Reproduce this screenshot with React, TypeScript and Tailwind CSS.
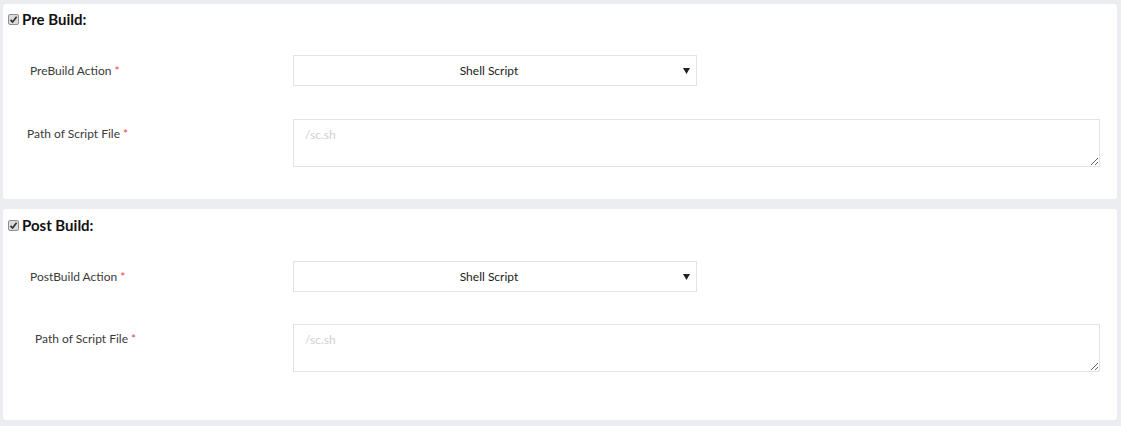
import React from "react";

function Check() {
  return (
    <span className="inline-flex h-[11px] w-[11px] items-center justify-center rounded-[2px] border border-[#8f8f8f] bg-[#dcdcdc]">
      <svg width="9" height="9" viewBox="0 0 9 9">
        <path d="M1.5 4.8 L3.6 7 L7.6 1.8" fill="none" stroke="#333" strokeWidth="1.7" />
      </svg>
    </span>
  );
}

function Label({ text, pl }: { text: string; pl: string }) {
  return (
    <div className={`w-[290px] shrink-0 text-[12px] text-[#3a3a3a] ${pl}`}>
      {text} <span className="text-[#e8474c]">*</span>
    </div>
  );
}

function Select() {
  return (
    <div className="relative flex h-[31px] w-[404px] items-center justify-center border border-[#e3e3e6] bg-white pr-[12px] text-[12px] text-[#222]">
      Shell Script
      <svg className="absolute right-[6px] top-[12px]" width="7" height="6" viewBox="0 0 7 6">
        <path d="M0 0 L7 0 L3.5 6 Z" fill="#222" />
      </svg>
    </div>
  );
}

function Area() {
  return (
    <textarea
      placeholder="/sc.sh"
      className="block h-[48px] w-[807px] resize-y border border-[#e3e3e6] bg-white px-[11px] py-[6px] text-[12px] text-[#333] outline-none placeholder:text-[#cfcfcf]"
      style={{ fontFamily: "Lato, sans-serif" }}
    />
  );
}

function Card({
  title,
  action,
  actionPl,
  pathPl,
  h,
  headPt,
  selTop,
  areaTop,
}: {
  title: string;
  action: string;
  actionPl: string;
  pathPl: string;
  h: string;
  headPt: string;
  selTop: string;
  areaTop: string;
}) {
  return (
    <div className={`rounded-[3px] bg-white ${h}`}>
      <div className={`flex h-[30px] items-center gap-[3px] pl-[5px] ${headPt}`}>
        <Check />
        <span className="text-[15px] font-bold text-[#111]">{title}</span>
      </div>
      <div className={`flex items-center ${selTop}`}>
        <Label text={action} pl={actionPl} />
        <Select />
      </div>
      <div className={`flex items-start ${areaTop}`}>
        <div className="pt-[6px]">
          <Label text="Path of Script File" pl={pathPl} />
        </div>
        <Area />
      </div>
    </div>
  );
}

export default function App() {
  return (
    <div
      className="flex min-h-[426px] flex-col gap-[10px] bg-[#ecedf1] pb-[6px] pl-[3px] pr-[4px] pt-[4px]"
      style={{ fontFamily: "Lato, sans-serif" }}
    >
      <Card
        title="Pre Build:"
        action="PreBuild Action"
        actionPl="pl-[27px]"
        pathPl="pl-[24px]"
        h="h-[195px]"
        headPt="pt-[1px]"
        selTop="mt-[21px]"
        areaTop="mt-[33px]"
      />
      <Card
        title="Post Build:"
        action="PostBuild Action"
        actionPl="pl-[27px]"
        pathPl="pl-[32px]"
        h="h-[211px]"
        headPt="pt-[3px]"
        selTop="mt-[22px]"
        areaTop="mt-[32px]"
      />
    </div>
  );
}
